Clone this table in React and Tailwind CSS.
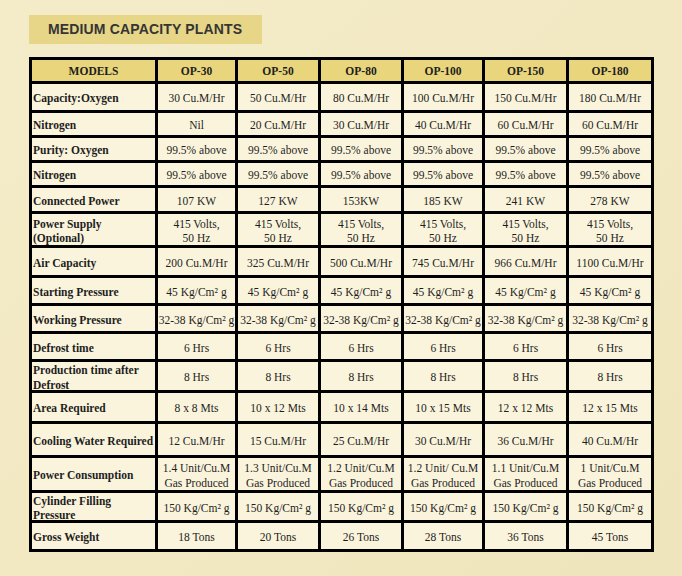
import React from "react";

const models = ["OP-30", "OP-50", "OP-80", "OP-100", "OP-150", "OP-180"];

const kg = "Kg/Cm² g";

const filas = [
  ["Capacity:Oxygen", ["30 Cu.M/Hr", "50 Cu.M/Hr", "80 Cu.M/Hr", "100 Cu.M/Hr", "150 Cu.M/Hr", "180 Cu.M/Hr"]],
  ["Nitrogen", ["Nil", "20 Cu.M/Hr", "30 Cu.M/Hr", "40 Cu.M/Hr", "60 Cu.M/Hr", "60 Cu.M/Hr"]],
  ["Purity: Oxygen", Array(6).fill("99.5% above")],
  ["Nitrogen", Array(6).fill("99.5% above")],
  ["Connected Power", ["107 KW", "127 KW", "153KW", "185 KW", "241 KW", "278 KW"]],
  [["Power Supply", "(Optional)"], Array(6).fill(["415 Volts,", "50 Hz"])],
  ["Air Capacity", ["200 Cu.M/Hr", "325 Cu.M/Hr", "500 Cu.M/Hr", "745 Cu.M/Hr", "966 Cu.M/Hr", "1100 Cu.M/Hr"]],
  ["Starting Pressure", Array(6).fill("45 " + kg)],
  ["Working Pressure", Array(6).fill("32-38 " + kg)],
  ["Defrost time", Array(6).fill("6 Hrs")],
  [["Production time after", "Defrost"], Array(6).fill("8 Hrs")],
  ["Area Required", ["8 x 8 Mts", "10 x 12 Mts", "10 x 14 Mts", "10 x 15 Mts", "12 x 12 Mts", "12 x 15 Mts"]],
  ["Cooling Water Required", ["12 Cu.M/Hr", "15 Cu.M/Hr", "25 Cu.M/Hr", "30 Cu.M/Hr", "36 Cu.M/Hr", "40 Cu.M/Hr"]],
  ["Power Consumption", [
    ["1.4 Unit/Cu.M", "Gas Produced"],
    ["1.3 Unit/Cu.M", "Gas Produced"],
    ["1.2 Unit/Cu.M", "Gas Produced"],
    ["1.2 Unit/ Cu.M", "Gas Produced"],
    ["1.1 Unit/Cu.M", "Gas Produced"],
    ["1 Unit/Cu.M", "Gas Produced"],
  ]],
  [["Cylinder Filling", "Pressure"], Array(6).fill("150 " + kg)],
  ["Gross Weight", ["18 Tons", "20 Tons", "26 Tons", "28 Tons", "36 Tons", "45 Tons"]],
];

const Texto = ({ v }) =>
  Array.isArray(v) ? (
    <>
      {v.map((l, i) => (
        <span key={i} className="block">
          {l}
        </span>
      ))}
    </>
  ) : (
    v
  );

export default function App() {
  return (
    <div
      className="w-[682px] h-[576px] bg-gradient-to-br from-[#f4ecc9] via-[#f2e9c3] to-[#efe5bc] pt-[15px] pl-[29px] overflow-hidden"
      style={{ fontFamily: '"Liberation Serif", serif' }}
    >
      {/* Titulo */}
      <div className="w-[233px] h-[29px] bg-[#e7d687] flex items-center pl-[19px]">
        <h1
          className="text-[14px] font-bold text-[#353535] tracking-[0.15px]"
          style={{ fontFamily: '"Liberation Sans", Arial, sans-serif' }}
        >
          MEDIUM CAPACITY PLANTS
        </h1>
      </div>

      {/* Tabla */}
      <div className="mt-[13px] w-fit grid grid-cols-[123px_77px_80px_80px_78px_81px_82px] grid-rows-[21px_26px_22px_22px_22px_23px_31px_27px_25px_25px_25px_28px_28px_31px_32px_27px_26px] gap-[3px] p-[3px] bg-black text-[11.5px] leading-[14.5px] text-[#1e1e1e]">
        <div className="bg-[#e9d67c] flex items-center justify-center font-bold pt-[1px]">MODELS</div>
        {models.map((m) => (
          <div key={m} className="bg-[#e9d67c] flex items-center justify-center font-bold pt-[1px]">
            {m}
          </div>
        ))}

        {filas.map(([label, vals], r) => (
          <React.Fragment key={r}>
            <div className="bg-[#faf4dc] flex flex-col justify-center pl-[1px] pt-[3px] font-bold">
              <Texto v={label} />
            </div>
            {vals.map((v, c) => (
              <div key={c} className="bg-[#faf4dc] flex flex-col items-center justify-center pt-[3px] text-center whitespace-nowrap">
                <Texto v={v} />
              </div>
            ))}
          </React.Fragment>
        ))}
      </div>
    </div>
  );
}
